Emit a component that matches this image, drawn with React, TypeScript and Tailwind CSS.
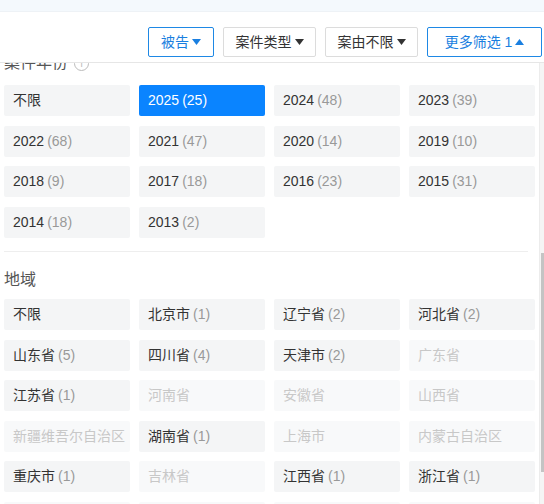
import React from "react";

type Item = { label: string; count?: number; active?: boolean; disabled?: boolean };

const years: Item[] = [
  { label: "不限" },
  { label: "2025", count: 25, active: true },
  { label: "2024", count: 48 },
  { label: "2023", count: 39 },
  { label: "2022", count: 68 },
  { label: "2021", count: 47 },
  { label: "2020", count: 14 },
  { label: "2019", count: 10 },
  { label: "2018", count: 9 },
  { label: "2017", count: 18 },
  { label: "2016", count: 23 },
  { label: "2015", count: 31 },
  { label: "2014", count: 18 },
  { label: "2013", count: 2 },
];

const regions: Item[] = [
  { label: "不限" },
  { label: "北京市", count: 1 },
  { label: "辽宁省", count: 2 },
  { label: "河北省", count: 2 },
  { label: "山东省", count: 5 },
  { label: "四川省", count: 4 },
  { label: "天津市", count: 2 },
  { label: "广东省", disabled: true },
  { label: "江苏省", count: 1 },
  { label: "河南省", disabled: true },
  { label: "安徽省", disabled: true },
  { label: "山西省", disabled: true },
  { label: "新疆维吾尔自治区", disabled: true },
  { label: "湖南省", count: 1 },
  { label: "上海市", disabled: true },
  { label: "内蒙古自治区", disabled: true },
  { label: "重庆市", count: 1 },
  { label: "吉林省", disabled: true },
  { label: "江西省", count: 1 },
  { label: "浙江省", count: 1 },
  { label: "福建省", disabled: true },
  { label: "广西壮族自治区", disabled: true },
  { label: "湖北省", disabled: true },
  { label: "黑龙江省", disabled: true },
];

const Caret = ({ up, color }: { up?: boolean; color: string }) => (
  <svg width="9" height="6" viewBox="0 0 9 6" className="ml-[3px]">
    <path d={up ? "M0 6 L4.5 0 L9 6 Z" : "M0 0 L9 0 L4.5 6 Z"} fill={color} />
  </svg>
);

const FilterButton = ({ label, width, active, up }: { label: string; width: string; active?: boolean; up?: boolean }) => (
  <button
    className={
      "flex h-[30px] items-center justify-center rounded-[2px] border text-[14px] " +
      width +
      (active ? " border-[#1e88e5] text-[#1a7fe0]" : " border-[#dcdcdc] text-[#333]")
    }
  >
    {label}
    <Caret up={up} color={active ? "#1a7fe0" : "#333"} />
  </button>
);

const Cell = ({ item }: { item: Item }) => (
  <div
    className={
      "flex h-[31px] items-center rounded-[2px] pl-[9px] text-[14px] whitespace-nowrap " +
      (item.active
        ? "bg-[#0a84ff] text-white"
        : item.disabled
        ? "bg-[#f8f9fa] text-[#c8c8c8]"
        : "bg-[#f4f5f6] text-[#333]")
    }
  >
    {item.label}
    {item.count !== undefined && (
      <span className={"ml-[3px] " + (item.active ? "text-white" : "text-[#999]")}>({item.count})</span>
    )}
  </div>
);

export default function App() {
  return (
    <div className="flex h-[504px] w-[544px] flex-col overflow-hidden bg-white font-['Liberation_Sans','Noto_Sans_CJK_SC',sans-serif]">
      <div className="h-[12px] border-b border-[#eef2f6] bg-[#f4f9fd]" />
      <div className="flex h-[51px] items-start justify-end gap-[9px] border-b border-[#e6e6e6] pr-[2px] pt-[15px]">
        <FilterButton label="被告" width="w-[66px]" active />
        <FilterButton label="案件类型" width="w-[93px]" />
        <FilterButton label="案由不限" width="w-[93px]" />
        <FilterButton label="更多筛选 1" width="w-[115px]" active up />
      </div>
      <div className="flex min-h-0 flex-1">
        <div className="min-w-0 flex-1 overflow-hidden">
          <div className="-mt-[11px] pl-[4px]">
            <div className="flex h-[22px] items-center text-[16px] text-[#555]">
              案件年份
              <span className="ml-[6px] flex h-[15px] w-[15px] items-center justify-center rounded-full border border-[#bbb] text-[10px] text-[#bbb]">
                i
              </span>
            </div>
            <div className="mt-[11px] grid w-[531px] grid-cols-4 gap-x-[9px] gap-y-[9.5px]">
              {years.map((y, i) => (
                <Cell key={i} item={y} />
              ))}
            </div>
            <div className="mt-[13.5px] mr-[11px] border-t border-[#eeeeee]" />
            <div className="mt-[17px] flex h-[22px] items-center text-[16px] text-[#555]">地域</div>
            <div className="mt-[8px] grid w-[531px] grid-cols-4 gap-x-[9px] gap-y-[9.5px]">
              {regions.map((r, i) => (
                <Cell key={i} item={r} />
              ))}
            </div>
          </div>
        </div>
        <div className="w-[5px] border-l border-[#ececec] bg-[#f5f5f5]">
          <div className="ml-auto mt-[190px] h-[219px] w-[3px] bg-[#c4c4c4]" />
        </div>
      </div>
    </div>
  );
}
